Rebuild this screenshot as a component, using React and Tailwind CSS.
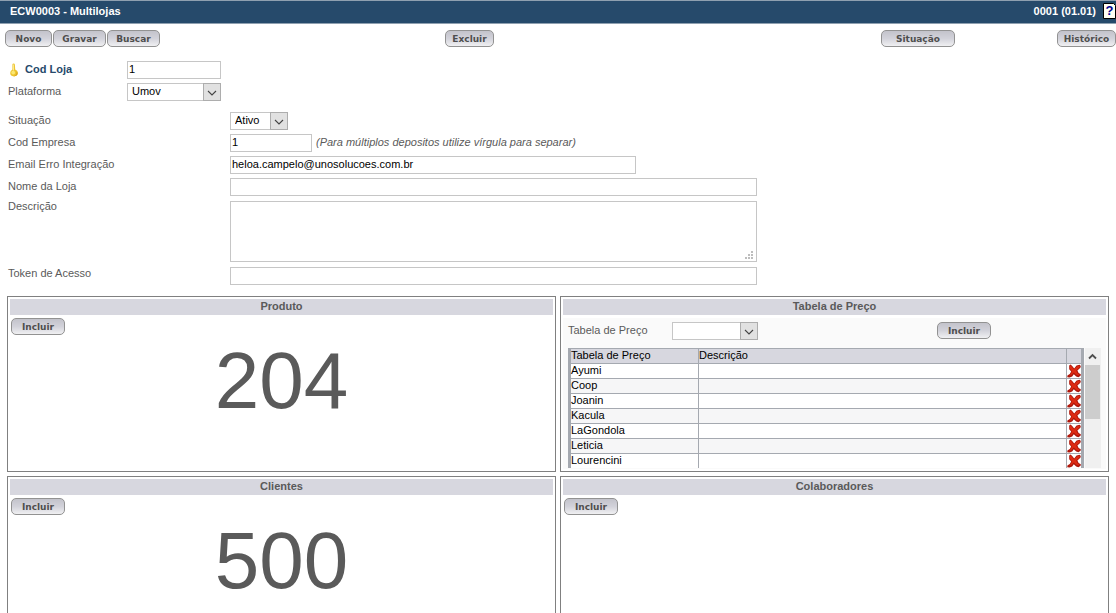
import React from "react";

const priceTables = ["Ayumi", "Coop", "Joanin", "Kacula", "LaGondola", "Leticia", "Lourencini"];

const fieldClass =
  "block h-[18px] border border-[#c6c6c6] bg-white px-px pb-[2px] text-[11px] leading-[14px] text-black outline-none";

const cellClass = "h-[15px] border-t border-[#a5a9b0] p-0 align-top";

function PillButton({ children, className = "" }) {
  return (
    <button
      type="button"
      className={`h-[17px] shrink-0 rounded-[5px] border border-[#929292] bg-linear-to-b from-[#c3c3cb] via-[#d2d2da] to-[#f0f0f2] pt-px text-center font-['DejaVu_Sans',sans-serif] text-[9px] leading-[14px] font-bold text-[#4e4e4e] ${className}`}
    >
      {children}
    </button>
  );
}

function SelectBox({ id, value, className }) {
  return (
    <div className={`relative ${className}`}>
      <select
        id={id}
        defaultValue={value}
        className="block h-[18px] w-full appearance-none border border-[#c6c6c6] bg-white pr-5 pb-[2px] pl-1 text-[11px] leading-[14px] text-black outline-none"
      >
        <option value={value}>{value}</option>
      </select>
      <span className="pointer-events-none absolute inset-y-0 right-0 flex w-[18px] items-center justify-center border border-[#adadad] bg-[#e1e1e1] pt-[2px]">
        <svg width="10" height="8" viewBox="0 0 10 8" fill="none" stroke="#444" strokeWidth="1.1">
          <path d="M1 2 L5 6 L9 2" />
        </svg>
      </span>
    </div>
  );
}

function FormRow({ label, htmlFor, top = false, children }) {
  return (
    <div className={`flex ${top ? "items-start" : "items-center"}`}>
      <label htmlFor={htmlFor} className={`w-[222px] shrink-0 leading-3 ${top ? "" : "pb-[2px]"}`}>
        {label}
      </label>
      {children}
    </div>
  );
}

function Panel({ title, open = false, children }) {
  return (
    <section
      className={`flex min-w-0 flex-col border border-[#808080] p-[2px] ${open ? "border-b-0 pb-0" : "h-44"}`}
    >
      <h2 className="h-4 bg-[#d7d7df] text-center text-[11px] leading-[15px] font-bold">{title}</h2>
      {children}
    </section>
  );
}

function CountBody({ count }) {
  return (
    <div className="flex flex-col px-px pt-[3px]">
      <PillButton className="w-[54px] self-start">Incluir</PillButton>
      <p className="text-center text-[80px] leading-[92px]">{count}</p>
    </div>
  );
}

function KeyIcon() {
  return (
    <svg width="12" height="14" viewBox="0 0 12 14" aria-hidden="true">
      <path d="M4.4 1.6 Q4.5 .6 5.6 .6 Q6.8 .7 6.9 1.8 L7.2 6.6 Q9.8 7.6 9.8 10 Q9.6 13.2 6 13.4 Q2.3 13.2 2.2 10 Q2.2 7.7 4.4 6.6 Z" fill="#eec52f" />
      <path d="M4.9 1.4 L5.8 1.4 L6 7.4 L4.9 7.4 Z" fill="#fbeb9a" />
      <circle cx="5.2" cy="9.6" r="1.9" fill="#fbe873" />
      <path d="M9.2 8.4 Q10.6 11.4 8 12.8 L5.6 13.4 Q9 12 8.6 8.8 Z" fill="#d8a41c" />
    </svg>
  );
}

function DeleteIcon() {
  return (
    <svg width="14" height="14" viewBox="0 0 14 14" className="block" aria-hidden="true">
      <path
        d="M2.2 1.6 L3.6 .6 L5.4 2.2 L7.2 4.4 L9.6 1.6 L12.6 .8 L13.8 2 L13.4 3.8 L10.4 6.4 L11.6 9 L13.8 10.2 L13.6 11.8 L11.4 13.2 L9.2 12.6 L6.8 10.2 L5.2 12.4 L2.6 13.6 L.3 13.2 L.4 11.6 L2.8 10 L4.2 7.4 L2.2 5.2 Z"
        fill="#ac160b"
      />
      <path
        d="M2.8 1.9 L3.8 1.4 L5.2 3.2 L7.2 5.6 L9.8 2.4 L12.4 1.6 L12.9 3 L9.2 6.5 L10.6 9.2 L12.6 10.8 L11.2 11.4 L8.8 10.4 L6.8 8.4 L4.6 10.9 L2.4 12 L5 7.4 L3 4.8 Z"
        fill="#dc2a12"
      />
    </svg>
  );
}

function HelpButton() {
  return (
    <button
      type="button"
      aria-label="Ajuda"
      className="relative mb-[3px] h-4 w-[13px] text-center text-[13px] leading-4 font-bold text-[#000090]"
    >
      <svg width="13" height="16" viewBox="0 0 13 16" className="absolute inset-0" aria-hidden="true">
        <path d="M.5 .5 H10.5 L12.5 2.5 V15.5 H.5 Z" fill="#fffff4" stroke="#000" />
      </svg>
      <span className="relative">?</span>
    </button>
  );
}

function PriceTable() {
  return (
    <div className="flex h-[120px] min-w-0 overflow-hidden">
      <table className="min-w-0 flex-1 table-fixed border-separate border-spacing-0 self-start border-x-[3px] border-[#a5a9b0] text-[11px] leading-[13px] text-black">
        <colgroup>
          <col className="w-[127px]" />
          <col />
          <col className="w-[15px]" />
        </colgroup>
        <thead>
          <tr className="bg-[#d7d7df] text-left">
            <th className={`font-normal ${cellClass}`}>Tabela de Preço</th>
            <th className={`border-l font-normal ${cellClass}`}>Descrição</th>
            <th className={`border-l ${cellClass}`} />
          </tr>
        </thead>
        <tbody>
          {priceTables.map((name) => (
            <tr key={name} className="odd:bg-white even:bg-[#f6f6f7]">
              <td className={cellClass}>{name}</td>
              <td className={`border-l ${cellClass}`} />
              <td className={`border-l bg-white ${cellClass}`}>
                <button type="button" aria-label={`Excluir ${name}`} className="block h-[14px] w-[14px]">
                  <DeleteIcon />
                </button>
              </td>
            </tr>
          ))}
        </tbody>
      </table>
      <div className="ml-px flex w-4 shrink-0 flex-col bg-[#f0f0f0]">
        <div className="flex h-[17px] items-center justify-center pr-px">
          <svg width="9" height="7" viewBox="0 0 9 7" fill="none" stroke="#505050" strokeWidth="1.8">
            <path d="M1 5.5 L4.5 2 L8 5.5" />
          </svg>
        </div>
        <div className="h-[54px] w-[15px] bg-[#cdcdcd]" />
      </div>
    </div>
  );
}

export default function App() {
  return (
    <div className="flex min-h-screen flex-col bg-white font-['Liberation_Sans',Arial,sans-serif] text-[11px] leading-4 text-[#5a5a5a]">
      <header className="flex h-6 items-center justify-between border-y border-[#8fa0b0] bg-[#264a6b] pl-[10px] font-bold text-white">
        <h1 className="pb-[2px]">ECW0003 - Multilojas</h1>
        <div className="flex items-center gap-[7px]">
          <span className="pb-[2px]">0001 (01.01)</span>
          <HelpButton />
        </div>
      </header>

      <nav className="grid grid-cols-[440fr_436fr_176fr_59px] pt-[6px] pl-[5px]">
        <div className="flex gap-px">
          <PillButton className="w-[47px]">Novo</PillButton>
          <PillButton className="w-[53px]">Gravar</PillButton>
          <PillButton className="w-[53px]">Buscar</PillButton>
        </div>
        <PillButton className="w-[49px]">Excluir</PillButton>
        <PillButton className="w-[74px]">Situação</PillButton>
        <PillButton className="w-[59px]">Histórico</PillButton>
      </nav>

      <form className="flex flex-col px-2">
        <div className="flex flex-col gap-1 pt-[14px]">
          <div className="flex items-center">
            <label htmlFor="codLoja" className="flex w-[119px] items-center gap-[5px] font-bold text-[#264a6b]">
              <KeyIcon />
              <span className="pb-[2px]">Cod Loja</span>
            </label>
            <input id="codLoja" defaultValue="1" className={`w-[94px] ${fieldClass}`} />
          </div>
          <div className="flex items-center">
            <label htmlFor="plataforma" className="w-[119px] pb-[2px]">
              Plataforma
            </label>
            <SelectBox id="plataforma" value="Umov" className="w-[94px]" />
          </div>
        </div>

        <div className="flex flex-col gap-1 pt-[11px]">
          <FormRow label="Situação" htmlFor="situacao">
            <SelectBox id="situacao" value="Ativo" className="w-[58px]" />
          </FormRow>
          <FormRow label="Cod Empresa" htmlFor="codEmpresa">
            <input id="codEmpresa" defaultValue="1" className={`w-[82px] ${fieldClass}`} />
            <em className="pb-[2px] pl-1">(Para múltiplos depositos utilize vírgula para separar)</em>
          </FormRow>
          <FormRow label="Email Erro Integração" htmlFor="email">
            <input
              id="email"
              defaultValue="heloa.campelo@unosolucoes.com.br"
              className={`w-[406px] ${fieldClass}`}
            />
          </FormRow>
          <FormRow label="Nome da Loja" htmlFor="nome">
            <input id="nome" className={`w-[527px] ${fieldClass}`} />
          </FormRow>
          <FormRow label="Descrição" htmlFor="descricao" top>
            <div className="relative w-[527px] py-px">
              <textarea
                id="descricao"
                className="block h-[61px] w-full resize-none border border-[#c6c6c6] bg-white px-px text-[11px] outline-none"
              />
              <svg
                width="8"
                height="8"
                viewBox="0 0 8 8"
                fill="#bdbdbd"
                className="pointer-events-none absolute right-1 bottom-1"
                aria-hidden="true"
              >
                <path d="M6 0h2v2h-2z M3 3h2v2h-2z M6 3h2v2h-2z M0 6h2v2h-2z M3 6h2v2h-2z M6 6h2v2h-2z" />
              </svg>
            </div>
          </FormRow>
          <FormRow label="Token de Acesso" htmlFor="token" top>
            <input id="token" className={`w-[527px] ${fieldClass}`} />
          </FormRow>
        </div>
      </form>

      <main className="grid flex-1 grid-cols-2 grid-rows-[auto_1fr] gap-1 px-[7px] pt-[11px]">
        <Panel title="Produto">
          <CountBody count="204" />
        </Panel>
        <Panel title="Tabela de Preço">
          <div className="mt-[3px] flex flex-1 flex-col bg-[#fafafa] px-[5px]">
            <div className="flex h-[30px] items-start pt-1">
              <label htmlFor="tabela" className="w-[104px] leading-4">
                Tabela de Preço
              </label>
              <SelectBox id="tabela" value="" className="w-[86px]" />
              <div className="flex flex-1 justify-center pl-[69px]">
                <PillButton className="w-[54px]">Incluir</PillButton>
              </div>
            </div>
            <PriceTable />
          </div>
        </Panel>
        <Panel title="Clientes" open>
          <CountBody count="500" />
        </Panel>
        <Panel title="Colaboradores" open>
          <div className="px-px pt-[3px]">
            <PillButton className="block w-[54px]">Incluir</PillButton>
          </div>
        </Panel>
      </main>
    </div>
  );
}
